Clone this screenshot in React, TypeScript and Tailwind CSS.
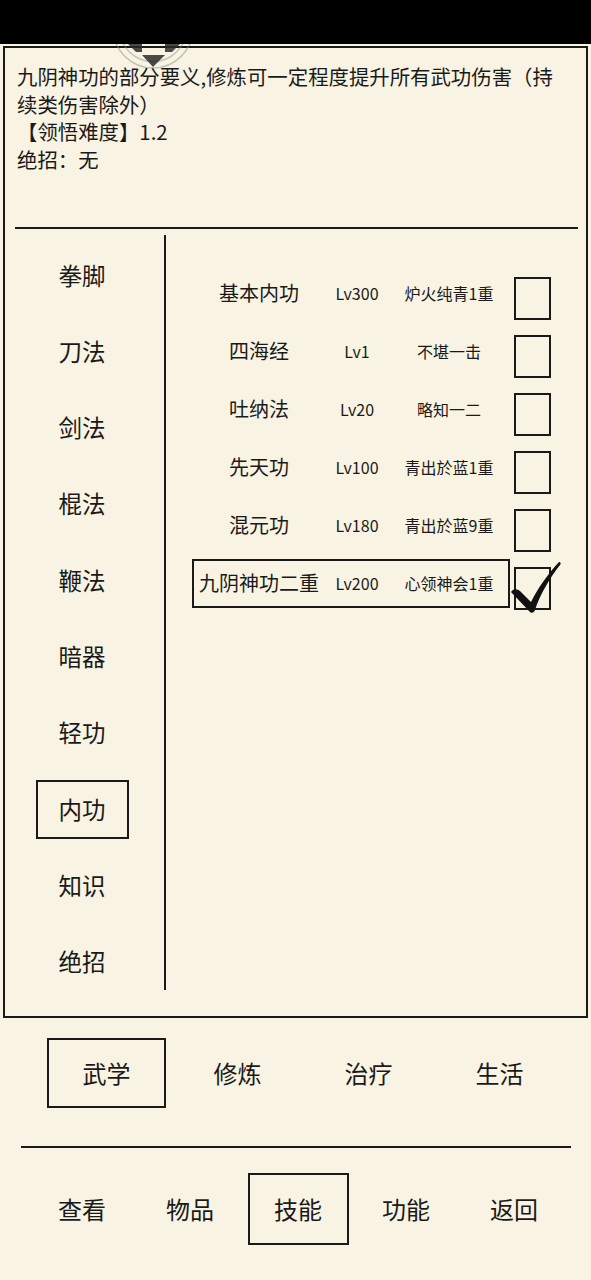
import React from "react";

const cats = ["拳脚", "刀法", "剑法", "棍法", "鞭法", "暗器", "轻功", "内功", "知识", "绝招"];
const rows = [
  { name: "基本内功", lv: "Lv300", st: "炉火纯青1重", sel: false },
  { name: "四海经", lv: "Lv1", st: "不堪一击", sel: false },
  { name: "吐纳法", lv: "Lv20", st: "略知一二", sel: false },
  { name: "先天功", lv: "Lv100", st: "青出於蓝1重", sel: false },
  { name: "混元功", lv: "Lv180", st: "青出於蓝9重", sel: false },
  { name: "九阴神功二重", lv: "Lv200", st: "心领神会1重", sel: true },
];
const tabs = ["武学", "修炼", "治疗", "生活"];
const navs = ["查看", "物品", "技能", "功能", "返回"];

export default function App() {
  return (
    <div className="relative w-[591px] h-[1280px] overflow-hidden bg-[#f8f3e2] text-[#1a1a1a] font-['Noto_Sans_CJK_SC','Noto_Sans',sans-serif]">
      <div className="h-[44px] bg-black" />
      {/* main panel */}
      <div className="ml-[3px] mt-[2px] w-[585px] h-[972px] border-2 border-[#1a1a1a] flex flex-col">
        <div className="h-[179px] pl-[12px] pt-[15px] text-[20.4px] leading-[27.5px]">
          <div className="whitespace-nowrap">九阴神功的部分要义,修炼可一定程度提升所有武功伤害（持</div>
          <div className="whitespace-nowrap">续类伤害除外）</div>
          <div className="whitespace-nowrap">【领悟难度】1.2</div>
          <div className="whitespace-nowrap">绝招：无</div>
        </div>
        <div className="ml-[10px] w-[563px] h-[2px] bg-[#1a1a1a]" />
        <div className="flex flex-row flex-1">
          <div className="w-[159px] pt-[8px] pr-[5px] flex flex-col">
            {cats.map((c) => (
              <div key={c} className="h-[76.3px] flex items-center justify-center">
                {c === "内功" ? (
                  <div className="w-[93px] h-[59px] border-2 border-[#1a1a1a] flex items-center justify-center text-[23.5px]">
                    {c}
                  </div>
                ) : (
                  <span className="text-[23.5px]">{c}</span>
                )}
              </div>
            ))}
          </div>
          <div className="mt-[6px] w-[2px] h-[755px] bg-[#1a1a1a]" />
          <div className="pl-[26px] pt-[35px] flex flex-col">
            {rows.map((r) => (
              <div key={r.name} className="h-[58px] flex flex-row items-center">
                <div
                  className={`w-[318px] h-[49px] flex flex-row items-center border-2 ${
                    r.sel ? "border-[#1a1a1a]" : "border-transparent"
                  }`}
                >
                  <div className="w-[130px] text-center text-[20px] whitespace-nowrap">{r.name}</div>
                  <div className="w-[66px] text-center text-[16px]">{r.lv}</div>
                  <div className="w-[118px] text-center text-[16px] whitespace-nowrap">{r.st}</div>
                </div>
                <div className="relative self-start mt-[13px] ml-[4px] w-[37px] h-[43px] border-2 border-[#1a1a1a]">
                  {r.sel && (
                    <svg
                      className="absolute left-0 top-0 overflow-visible"
                      width="38"
                      height="43"
                      viewBox="0 0 38 43"
                    >
                      <path
                        d="M-5 23 C-2 19 2 20 5 23 L15 33 C22 19 32 5 43 -7 C45 -7 45 -5 44 -4 C33 10 24 26 19 41 C18 44 15 45 13 42 Z"
                        fill="#111"
                      />
                    </svg>
                  )}
                </div>
              </div>
            ))}
          </div>
        </div>
      </div>
      {/* tabs */}
      <div className="flex flex-row pl-[47px] pt-[20px] h-[128px]">
        {tabs.map((t, i) => (
          <div key={t} className="w-[131px] h-[70px] flex items-center">
            {i === 0 ? (
              <div className="w-[119px] h-[70px] border-2 border-[#1a1a1a] flex items-center justify-center text-[24px]">
                {t}
              </div>
            ) : (
              <div className="w-[119px] text-center text-[24px]">{t}</div>
            )}
          </div>
        ))}
      </div>
      <div className="ml-[21px] w-[550px] h-[2px] bg-[#1a1a1a]" />
      <div className="flex flex-row pl-[28px] pt-[25px]">
        {navs.map((n) => (
          <div key={n} className="w-[108px] h-[72px] flex items-center justify-center">
            {n === "技能" ? (
              <div className="w-[101px] h-[72px] border-2 border-[#1a1a1a] flex items-center justify-center text-[24px]">
                {n}
              </div>
            ) : (
              <span className="text-[24px]">{n}</span>
            )}
          </div>
        ))}
      </div>
      {/* pull-down indicator overlay (only visible below the black bar) */}
      <svg className="absolute left-[105px] top-[44px]" width="100" height="30" viewBox="105 44 100 30">
        <circle cx="153" cy="28" r="40" fill="none" stroke="#8a8a8a" strokeOpacity="0.5" strokeWidth="1.5" />
        <circle cx="153" cy="28" r="33.5" fill="none" stroke="#8a8a8a" strokeOpacity="0.45" strokeWidth="1.5" />
        <path d="M128 44 L142 44 L142 52 L136 52 Z" fill="#2a2a2a" fillOpacity="0.85" />
        <path d="M180 44 L165 44 L165 52 L172 52 Z" fill="#2a2a2a" fillOpacity="0.85" />
        <path d="M142 55 L165 55 L153 67 Z" fill="#2a2a2a" fillOpacity="0.85" />
      </svg>
    </div>
  );
}
